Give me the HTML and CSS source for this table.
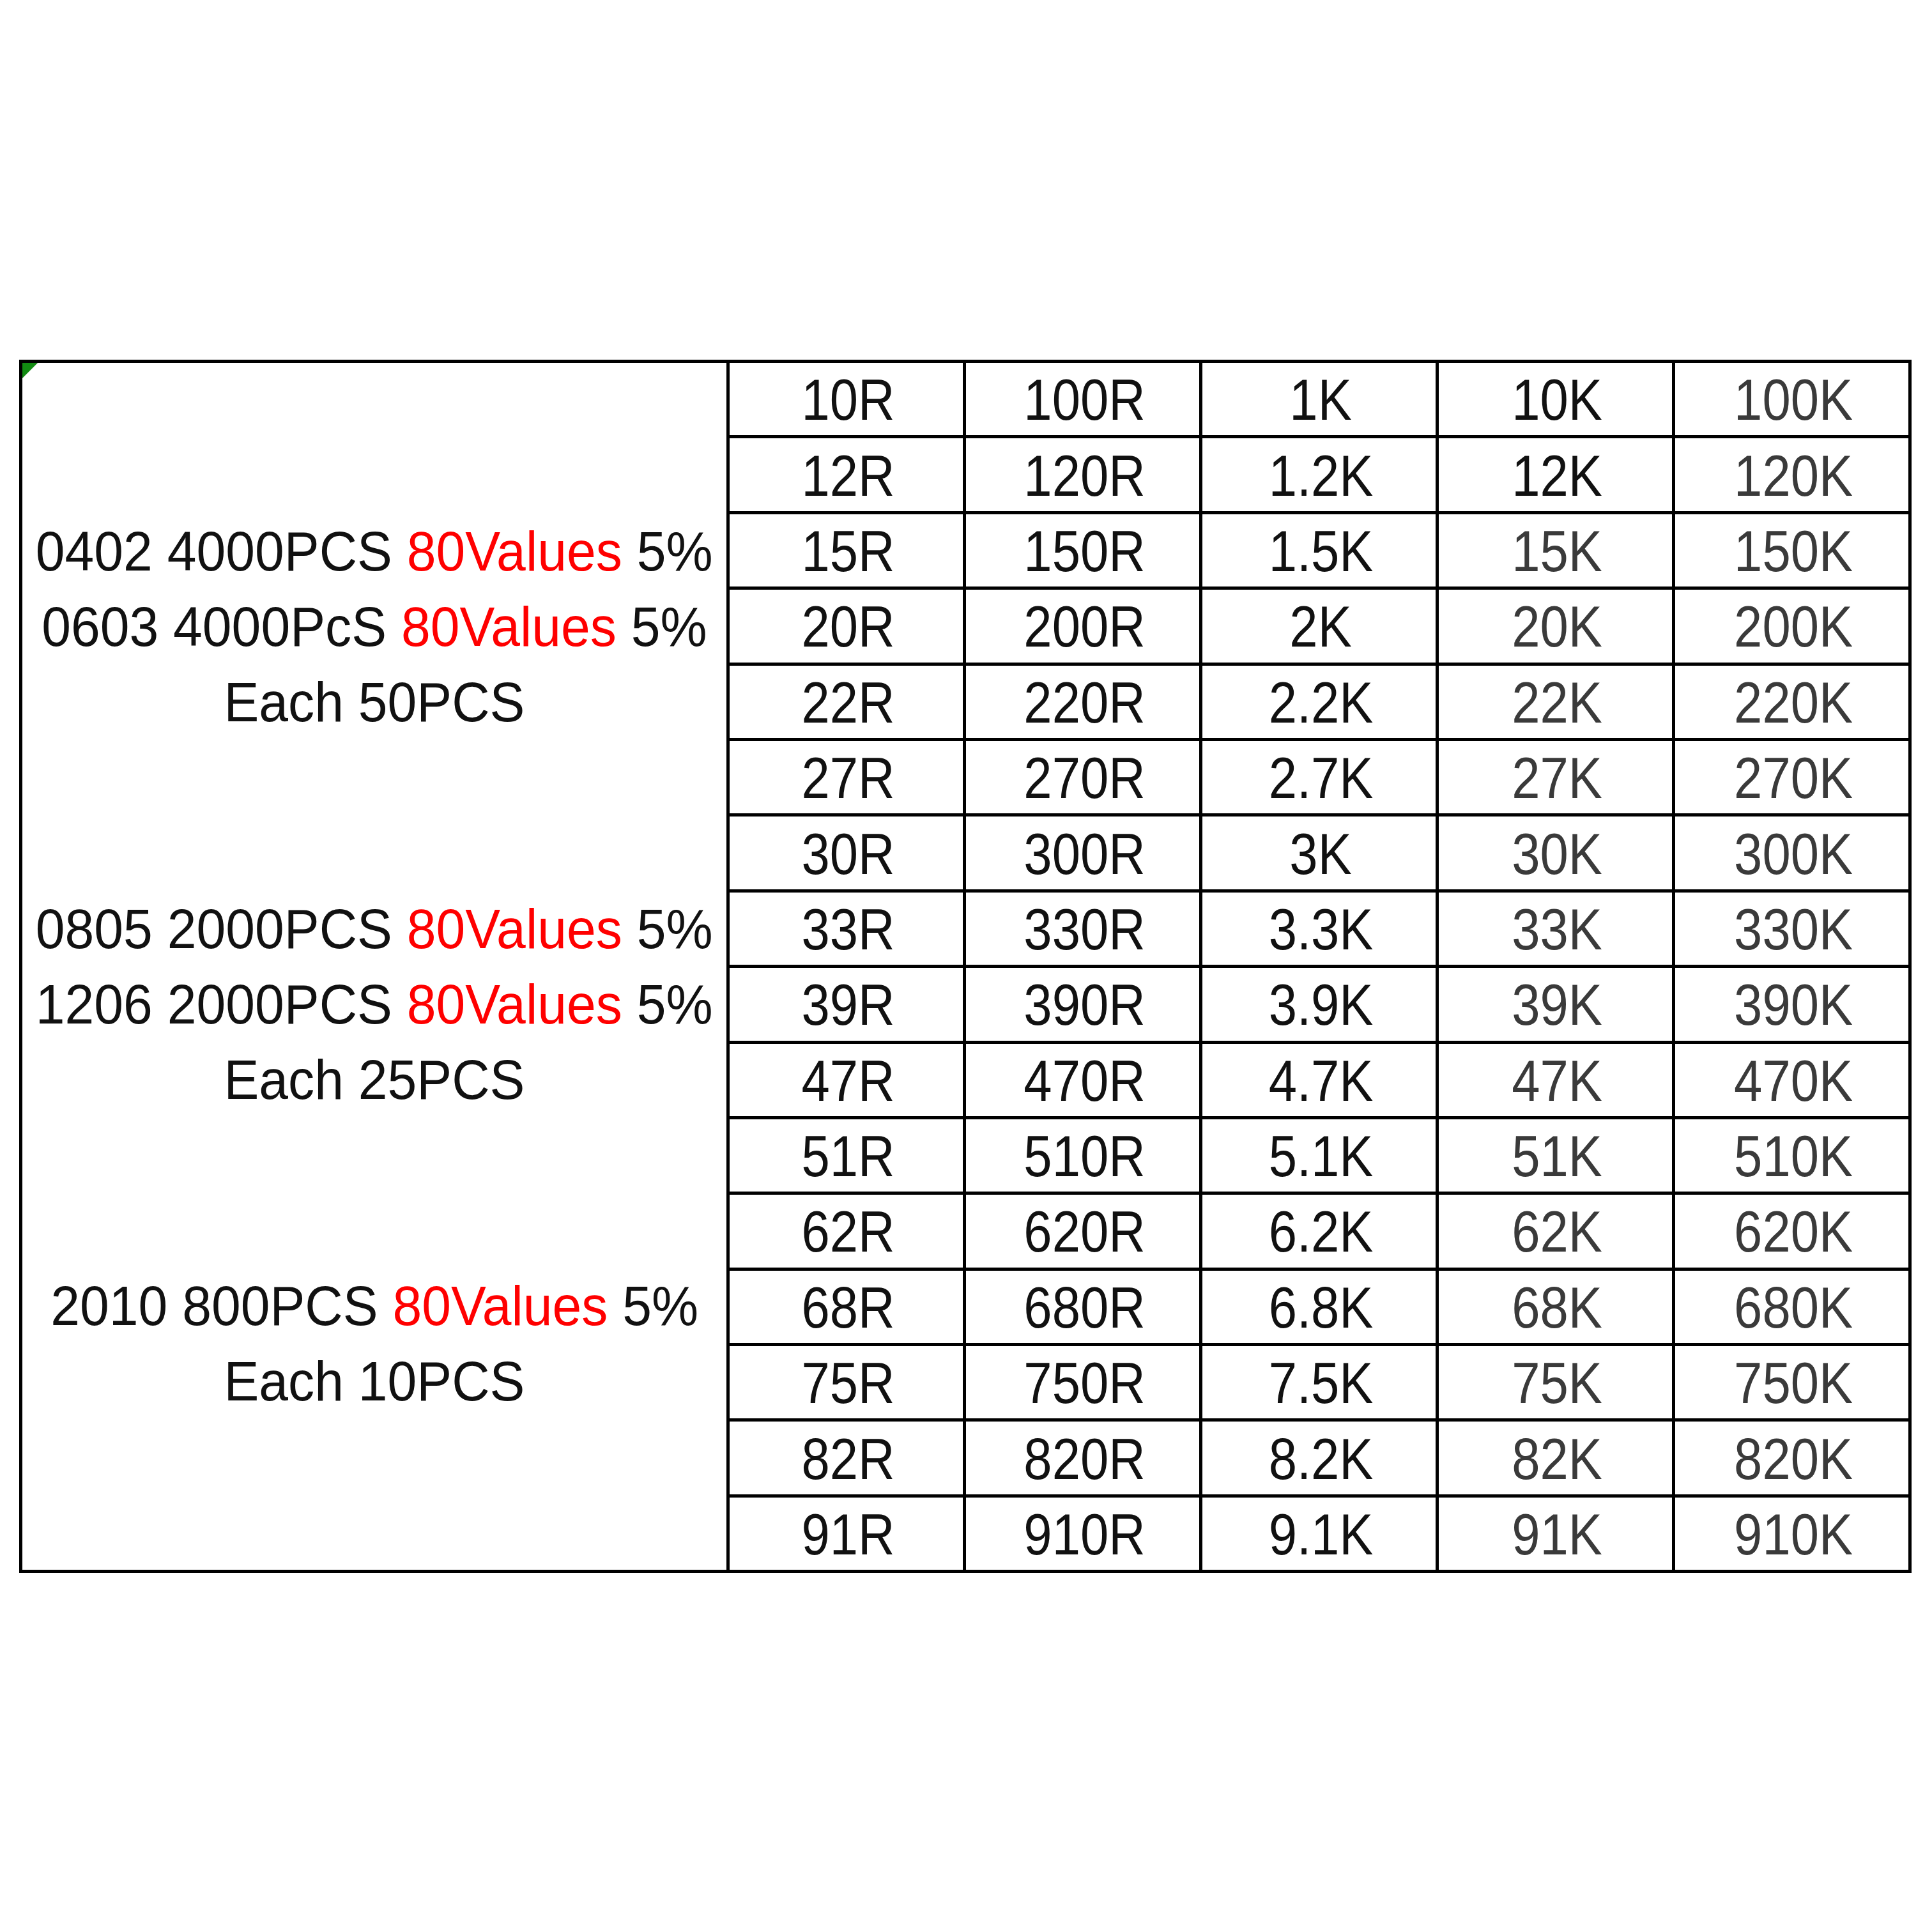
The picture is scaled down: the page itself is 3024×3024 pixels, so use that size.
FILE: index.html
```html
<!DOCTYPE html>
<html>
<head>
<meta charset="utf-8">
<link rel="stylesheet" href="styles.css">
</head>
<body>
<div class="page">
  <div class="sheet">
    <div class="desc">
      <span class="marker"></span>
      <div class="line"></div>
      <div class="line"></div>
      <div class="line"><span class="t">0402 4000PCS <span class="red">80Values</span> 5%</span></div>
      <div class="line"><span class="t">0603 4000PcS <span class="red">80Values</span> 5%</span></div>
      <div class="line"><span class="t">Each 50PCS</span></div>
      <div class="line"></div>
      <div class="line"></div>
      <div class="line"><span class="t">0805 2000PCS <span class="red">80Values</span> 5%</span></div>
      <div class="line"><span class="t">1206 2000PCS <span class="red">80Values</span> 5%</span></div>
      <div class="line"><span class="t">Each 25PCS</span></div>
      <div class="line"></div>
      <div class="line"></div>
      <div class="line"><span class="t">2010 800PCS <span class="red">80Values</span> 5%</span></div>
      <div class="line"><span class="t">Each 10PCS</span></div>
      <div class="line"></div>
      <div class="line"></div>
    </div>
    <div class="cell"><span>10R</span></div><div class="cell"><span>100R</span></div><div class="cell"><span>1K</span></div><div class="cell"><span>10K</span></div><div class="cell g"><span>100K</span></div>
    <div class="cell"><span>12R</span></div><div class="cell"><span>120R</span></div><div class="cell"><span>1.2K</span></div><div class="cell"><span>12K</span></div><div class="cell g"><span>120K</span></div>
    <div class="cell"><span>15R</span></div><div class="cell"><span>150R</span></div><div class="cell"><span>1.5K</span></div><div class="cell g"><span>15K</span></div><div class="cell g"><span>150K</span></div>
    <div class="cell"><span>20R</span></div><div class="cell"><span>200R</span></div><div class="cell"><span>2K</span></div><div class="cell g"><span>20K</span></div><div class="cell g"><span>200K</span></div>
    <div class="cell"><span>22R</span></div><div class="cell"><span>220R</span></div><div class="cell"><span>2.2K</span></div><div class="cell g"><span>22K</span></div><div class="cell g"><span>220K</span></div>
    <div class="cell"><span>27R</span></div><div class="cell"><span>270R</span></div><div class="cell"><span>2.7K</span></div><div class="cell g"><span>27K</span></div><div class="cell g"><span>270K</span></div>
    <div class="cell"><span>30R</span></div><div class="cell"><span>300R</span></div><div class="cell"><span>3K</span></div><div class="cell g"><span>30K</span></div><div class="cell g"><span>300K</span></div>
    <div class="cell"><span>33R</span></div><div class="cell"><span>330R</span></div><div class="cell"><span>3.3K</span></div><div class="cell g"><span>33K</span></div><div class="cell g"><span>330K</span></div>
    <div class="cell"><span>39R</span></div><div class="cell"><span>390R</span></div><div class="cell"><span>3.9K</span></div><div class="cell g"><span>39K</span></div><div class="cell g"><span>390K</span></div>
    <div class="cell"><span>47R</span></div><div class="cell"><span>470R</span></div><div class="cell"><span>4.7K</span></div><div class="cell g"><span>47K</span></div><div class="cell g"><span>470K</span></div>
    <div class="cell"><span>51R</span></div><div class="cell"><span>510R</span></div><div class="cell"><span>5.1K</span></div><div class="cell g"><span>51K</span></div><div class="cell g"><span>510K</span></div>
    <div class="cell"><span>62R</span></div><div class="cell"><span>620R</span></div><div class="cell"><span>6.2K</span></div><div class="cell g"><span>62K</span></div><div class="cell g"><span>620K</span></div>
    <div class="cell"><span>68R</span></div><div class="cell"><span>680R</span></div><div class="cell"><span>6.8K</span></div><div class="cell g"><span>68K</span></div><div class="cell g"><span>680K</span></div>
    <div class="cell"><span>75R</span></div><div class="cell"><span>750R</span></div><div class="cell"><span>7.5K</span></div><div class="cell g"><span>75K</span></div><div class="cell g"><span>750K</span></div>
    <div class="cell"><span>82R</span></div><div class="cell"><span>820R</span></div><div class="cell"><span>8.2K</span></div><div class="cell g"><span>82K</span></div><div class="cell g"><span>820K</span></div>
    <div class="cell"><span>91R</span></div><div class="cell"><span>910R</span></div><div class="cell"><span>9.1K</span></div><div class="cell g"><span>91K</span></div><div class="cell g"><span>910K</span></div>
  </div>
</div>
</body>
</html>
```
FILE: styles.css
```css
html, body {
  margin: 0;
  padding: 0;
  background: #ffffff;
}

.page {
  width: 3024px;
  height: 3024px;
  box-sizing: border-box;
  padding: 563px 0 0 30px;
  background: #ffffff;
}

.sheet {
  display: grid;
  grid-template-columns: 1102px repeat(5, 365px);
  grid-template-rows: repeat(16, 113.4px);
  gap: 5px;
  padding: 5px;
  width: fit-content;
  background: #000000;
  font-family: "Liberation Sans", Arial, sans-serif;
  color: #111111;
}

.desc {
  grid-column: 1;
  grid-row: 1 / 17;
  background: #ffffff;
  position: relative;
  display: flex;
  flex-direction: column;
}

.marker {
  position: absolute;
  left: 0;
  top: 0;
  width: 0;
  height: 0;
  border-top: 24px solid #128a12;
  border-right: 24px solid transparent;
}

.line {
  height: 118.09px;
  display: flex;
  align-items: center;
  justify-content: center;
  white-space: nowrap;
  font-size: 88px;
}

.line .t {
  display: inline-block;
  transform: scaleX(0.935);
  white-space: nowrap;
}

.red {
  color: #ff0000;
}

.cell {
  background: #ffffff;
  display: flex;
  align-items: center;
  justify-content: center;
  font-size: 90px;
  padding-top: 4px;
  padding-left: 6px;
  box-sizing: border-box;
}

.cell span {
  display: inline-block;
  transform: scaleX(0.885);
  white-space: nowrap;
}

.cell.g {
  color: #3a3a3a;
}
```
